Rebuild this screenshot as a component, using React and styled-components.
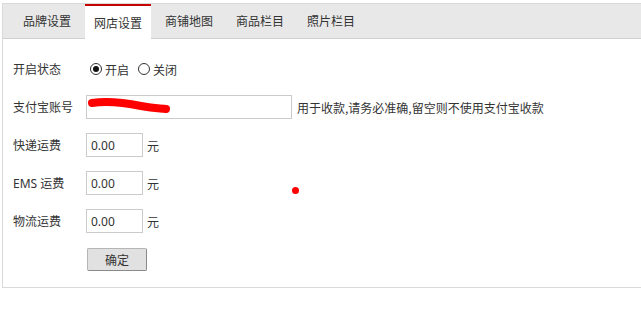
import React from "react";
import styled, { createGlobalStyle } from "styled-components";

const GlobalStyle = createGlobalStyle`
  html, body {
    margin: 0;
    padding: 0;
    background: #fff;
    overflow: hidden;
  }
  body {
    font-family: "Noto Sans", "Noto Sans CJK SC", sans-serif;
    font-size: 12px;
    color: #333;
  }
`;

const tabs = ["品牌设置", "网店设置", "商铺地图", "商品栏目", "照片栏目"];

const fees = [
  { label: "快递运费", value: "0.00" },
  { label: "EMS 运费", value: "0.00" },
  { label: "物流运费", value: "0.00" },
];

function App() {
  return (
    <>
      <GlobalStyle />
      <Page>
        <Panel>
          <TabBar>
            {tabs.map((t, i) => (
              <Tab key={t} active={i === 1}>
                {t}
              </Tab>
            ))}
          </TabBar>
          <Form>
            <Row>
              <Label>开启状态</Label>
              <Radio checked />
              <RadioText>开启</RadioText>
              <Radio />
              <RadioText>关闭</RadioText>
            </Row>
            <Row>
              <Label>支付宝账号</Label>
              <Redacted>
                <TextInput width={206} defaultValue="" />
                <Scribble width="90" height="22" viewBox="0 0 90 22">
                  <path
                    d="M6 7 C 20 5, 40 7, 55 10 S 75 12, 80 13"
                    stroke="#f00"
                    strokeWidth="8"
                    strokeLinecap="round"
                    fill="none"
                  />
                </Scribble>
              </Redacted>
              <Hint>用于收款,请务必准确,留空则不使用支付宝收款</Hint>
            </Row>
            {fees.map((f) => (
              <Row key={f.label}>
                <Label>{f.label}</Label>
                <TextInput width={57} defaultValue={f.value} />
                <Unit>元</Unit>
              </Row>
            ))}
            <Row>
              <Label />
              <Button>确定</Button>
            </Row>
          </Form>
          <Dot />
        </Panel>
      </Page>
    </>
  );
}

const Page = styled.div`
  padding: 3px 0 0 2px;
`;

const Panel = styled.div`
  position: relative;
  border: 1px solid #d9d9d9;
  border-right: none;
`;

const TabBar = styled.div`
  display: flex;
  gap: 5px;
  height: 34px;
  padding-left: 11px;
  background: #e8e8e8;
  border-bottom: 1px solid #d0d0d0;
`;

const Tab = styled.div`
  width: 66px;
  height: ${(p) => (p.active ? "33px" : "34px")};
  line-height: ${(p) => (p.active ? "33px" : "34px")};
  text-align: center;
  font-family: "Noto Sans CJK SC", sans-serif;
  font-size: 12px;
  color: #333;
  background: ${(p) => (p.active ? "#fff" : "transparent")};
  border-top: ${(p) => (p.active ? "2px solid #c40000" : "none")};
  margin-bottom: ${(p) => (p.active ? "-1px" : "0")};
`;

const Form = styled.div`
  display: flex;
  flex-direction: column;
  gap: 14px;
  padding: 18px 10px 16px 10px;
`;

const Row = styled.div`
  display: flex;
  align-items: center;
  height: 24px;
`;

const Label = styled.div`
  width: 73px;
  flex: none;
  font-family: "Noto Sans", "Noto Sans CJK SC", sans-serif;
  font-size: 12px;
  color: #333;
`;

const Radio = styled.span`
  position: relative;
  width: 10px;
  height: 10px;
  border: 1px solid #333;
  border-radius: 50%;
  margin: 0 3px 0 4px;
  &::after {
    content: "";
    display: ${(p) => (p.checked ? "block" : "none")};
    position: absolute;
    left: 2px;
    top: 2px;
    width: 6px;
    height: 6px;
    border-radius: 50%;
    background: #111;
  }
`;

const RadioText = styled.span`
  font-family: "Noto Sans CJK SC", sans-serif;
  font-size: 12px;
  margin-right: 5px;
`;

const Redacted = styled.div`
  position: relative;
  display: flex;
`;

const Scribble = styled.svg`
  position: absolute;
  left: 0;
  top: 1px;
`;

const TextInput = styled.input`
  box-sizing: border-box;
  width: ${(p) => p.width}px;
  height: 24px;
  margin: 0;
  padding: 0 4px;
  border: 1px solid #cbcbcb;
  font-family: "Noto Sans", "Noto Sans CJK SC", sans-serif;
  font-size: 12px;
  color: #333;
  outline: none;
`;

const Hint = styled.span`
  margin-left: 5px;
  font-family: "Noto Sans CJK SC", sans-serif;
  font-size: 12px;
`;

const Unit = styled.span`
  margin-left: 4px;
  font-family: "Noto Sans CJK SC", sans-serif;
  font-size: 12px;
`;

const Button = styled.button`
  box-sizing: border-box;
  width: 60px;
  height: 23px;
  margin: 0 0 0 1px;
  padding: 0;
  background: #e1e1e1;
  border: 1px solid #b5b5b5;
  border-right-color: #8a8a8a;
  border-bottom-color: #8a8a8a;
  border-radius: 2px;
  font-family: "Noto Sans CJK SC", sans-serif;
  font-size: 12px;
  color: #333;
`;

const Dot = styled.span`
  position: absolute;
  left: 289px;
  top: 183px;
  width: 7px;
  height: 7px;
  border-radius: 50%;
  background: #f00;
`;

export default App;
